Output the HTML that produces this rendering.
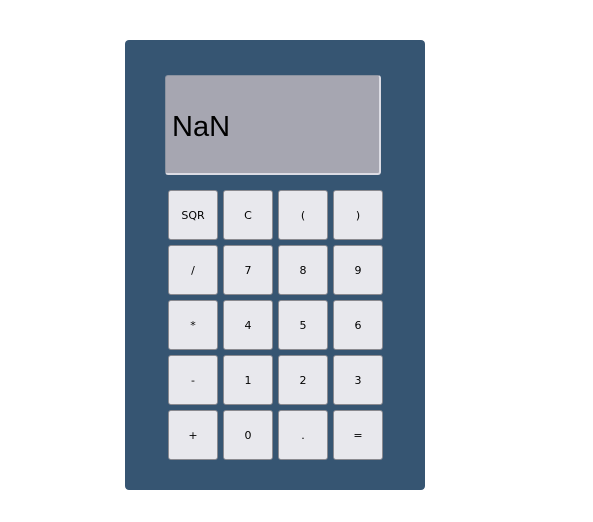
<!DOCTYPE html>
<html><head><style>
body{margin:0;background:#fff;width:593px;height:522px;position:relative;font-family:"DejaVu Sans","Liberation Sans",sans-serif;}
.p{position:absolute;left:125px;top:40px;width:300px;height:450px;background:#365572;border-radius:4px;}
.d{position:absolute;left:165px;top:75px;width:213px;height:97px;background:#a6a6b1;border:1px solid #8c93a0;border-right:2px solid #dcdce4;border-bottom:2px solid #dcdce4;border-radius:3px;box-sizing:content-box;}
.d span{position:absolute;left:6px;top:35px;font-size:29px;font-family:"Liberation Sans",sans-serif;color:#000;}
.b{position:absolute;width:48px;height:48px;background:#e8e8ed;border:1px solid #8a8a90;border-radius:3px;font-size:11px;display:flex;align-items:center;justify-content:center;color:#000;}
</style></head><body>
<div class="p"></div>
<div class="d"><span>NaN</span></div>
<div class="b" style="left:168px;top:190px">SQR</div><div class="b" style="left:223px;top:190px">C</div><div class="b" style="left:278px;top:190px">(</div><div class="b" style="left:333px;top:190px">)</div>
<div class="b" style="left:168px;top:245px">/</div><div class="b" style="left:223px;top:245px">7</div><div class="b" style="left:278px;top:245px">8</div><div class="b" style="left:333px;top:245px">9</div>
<div class="b" style="left:168px;top:300px">*</div><div class="b" style="left:223px;top:300px">4</div><div class="b" style="left:278px;top:300px">5</div><div class="b" style="left:333px;top:300px">6</div>
<div class="b" style="left:168px;top:355px">-</div><div class="b" style="left:223px;top:355px">1</div><div class="b" style="left:278px;top:355px">2</div><div class="b" style="left:333px;top:355px">3</div>
<div class="b" style="left:168px;top:410px">+</div><div class="b" style="left:223px;top:410px">0</div><div class="b" style="left:278px;top:410px">.</div><div class="b" style="left:333px;top:410px">=</div>
</body></html>
